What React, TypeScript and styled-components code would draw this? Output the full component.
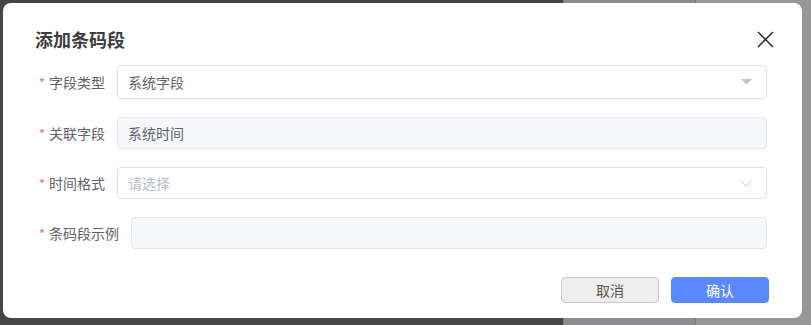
import React from "react";
import styled, { createGlobalStyle } from "styled-components";

const GlobalStyle = createGlobalStyle`
	html, body {
		margin: 0;
		padding: 0;
		background: #464646;
	}
	body {
		font-family: "Noto Sans CJK SC", "Noto Sans", sans-serif;
	}
`;

const Page = styled.div`
	position: relative;
	width: 811px;
	height: 325px;
	overflow: hidden;
	display: grid;
	grid-template-columns: 563px 132px 1fr;
`;

const BackPane = styled.div<{ tone: string }>`
	background: ${(props) => props.tone};
	border-left: ${(props) => (props.tone === "#464646" ? "none" : "1px solid #7a7a7a")};
`;

const Modal = styled.div`
	position: absolute;
	left: 3px;
	top: 3px;
	width: 799px;
	height: 315px;
	background: #ffffff;
	border-radius: 8px;
	box-sizing: border-box;
	display: flex;
	flex-direction: column;
`;

const Header = styled.div`
	display: flex;
	justify-content: space-between;
	align-items: center;
	padding: 24px 28px 0 32px;
	height: 24px;
`;

const Title = styled.h2`
	margin: 0;
	font-size: 18px;
	line-height: 24px;
	font-weight: 700;
	color: #3d3d3f;
`;

const CloseButton = styled.button`
	border: none;
	background: none;
	padding: 0;
	width: 18px;
	height: 18px;
	display: flex;
	align-items: center;
	justify-content: center;
	cursor: pointer;
`;

const Form = styled.div`
	display: flex;
	flex-direction: column;
	gap: 18px;
	padding: 14px 35px 0 36px;
`;

const Row = styled.div`
	display: flex;
	align-items: center;
	gap: 12px;
`;

const Label = styled.label`
	font-size: 14px;
	color: #606266;
	white-space: nowrap;
	display: flex;
	align-items: center;
`;

const Star = styled.span`
	color: #f56c6c;
	margin-right: 4px;
	font-size: 13px;
`;

const Field = styled.div<{ disabled?: boolean; tall?: boolean }>`
	flex: 1;
	height: ${(props) => (props.tall ? "34px" : "32px")};
	box-sizing: border-box;
	border: 1px solid ${(props) => (props.disabled ? "#e4e7ed" : "#dcdfe6")};
	background: ${(props) => (props.disabled ? "#f5f7fa" : "#ffffff")};
	border-radius: 4px;
	display: flex;
	align-items: center;
	justify-content: space-between;
	padding: 0 14px 0 10px;
`;

const FieldText = styled.span<{ placeholder?: boolean }>`
	font-size: 14px;
	color: ${(props) => (props.placeholder ? "#b8bcc4" : "#606266")};
`;

const Footer = styled.div`
	display: flex;
	justify-content: flex-end;
	gap: 12px;
	margin-top: 28px;
	padding-right: 33px;
`;

const Button = styled.button<{ primary?: boolean }>`
	width: 98px;
	height: 26px;
	box-sizing: border-box;
	border-radius: 4px;
	font-family: inherit;
	font-size: 14px;
	border: 1px solid ${(props) => (props.primary ? "#5a89ff" : "#c9cacc")};
	background: ${(props) => (props.primary ? "#5a89ff" : "#efeded")};
	color: ${(props) => (props.primary ? "#ffffff" : "#555555")};
	cursor: pointer;
`;

const Caret = () => (
	<svg width="11" height="6" viewBox="0 0 11 6">
		<path d="M0 0 L11 0 L5.5 5.5 Z" fill="#c0c4cc" />
	</svg>
);

const Chevron = () => (
	<svg width="12" height="7" viewBox="0 0 12 7">
		<path d="M0.5 0.5 L6 6 L11.5 0.5" fill="none" stroke="#c0c4cc" strokeWidth="1" />
	</svg>
);

const rows = [
	{ label: "字段类型", value: "系统字段", icon: "caret", tall: true },
	{ label: "关联字段", value: "系统时间", disabled: true },
	{ label: "时间格式", value: "请选择", placeholder: true, icon: "chevron" },
	{ label: "条码段示例", value: "", disabled: true },
];

export default function App() {
	return (
		<>
			<GlobalStyle />
			<Page>
				<BackPane tone="#464646" />
				<BackPane tone="#8c8c8e" />
				<BackPane tone="#979797" />
				<Modal>
					<Header>
						<Title>添加条码段</Title>
						<CloseButton aria-label="close">
							<svg width="17" height="17" viewBox="0 0 17 17">
								<path d="M1 1 L16 16 M16 1 L1 16" stroke="#1a1a1a" strokeWidth="1.3" />
							</svg>
						</CloseButton>
					</Header>
					<Form>
						{rows.map((r) => (
							<Row key={r.label}>
								<Label>
									<Star>*</Star>
									{r.label}
								</Label>
								<Field disabled={r.disabled} tall={r.tall}>
									<FieldText placeholder={r.placeholder}>{r.value}</FieldText>
									{r.icon === "caret" && <Caret />}
									{r.icon === "chevron" && <Chevron />}
								</Field>
							</Row>
						))}
					</Form>
					<Footer>
						<Button>取消</Button>
						<Button primary>确认</Button>
					</Footer>
				</Modal>
			</Page>
		</>
	);
}
